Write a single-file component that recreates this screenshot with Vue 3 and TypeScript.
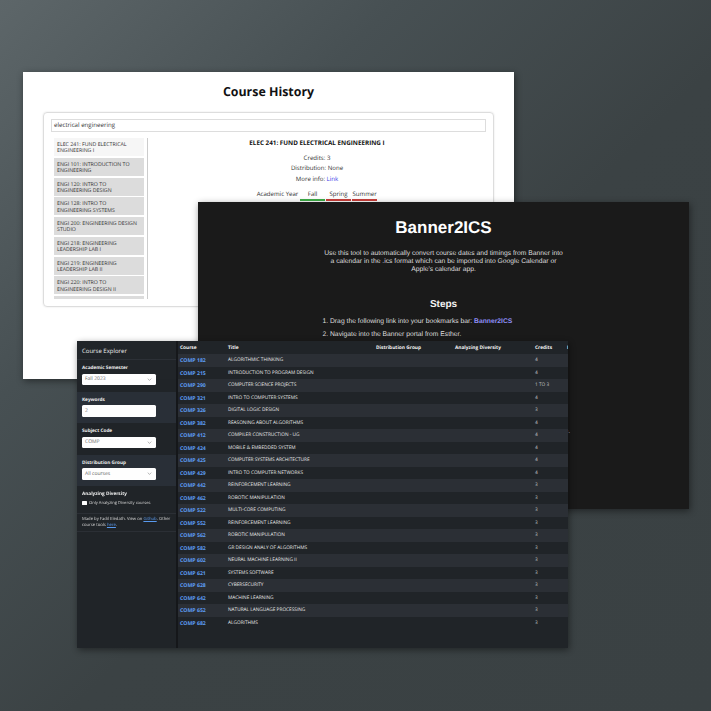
<script setup lang="ts">
const history = [
  'ELEC 241: FUND ELECTRICAL ENGINEERING I',
  'ENGI 101: INTRODUCTION TO ENGINEERING',
  'ENGI 120: INTRO TO ENGINEERING DESIGN',
  'ENGI 128: INTRO TO ENGINEERING SYSTEMS',
  'ENGI 200: ENGINEERING DESIGN STUDIO',
  'ENGI 218: ENGINEERING LEADERSHIP LAB I',
  'ENGI 219: ENGINEERING LEADERSHIP LAB II',
  'ENGI 220: INTRO TO ENGINEERING DESIGN II',
  'ENGI 221: ENGINEERING',
]

const courses: [string, string, string][] = [
  ['COMP 182', 'ALGORITHMIC THINKING', '4'],
  ['COMP 215', 'INTRODUCTION TO PROGRAM DESIGN', '4'],
  ['COMP 290', 'COMPUTER SCIENCE PROJECTS', '1 TO 3'],
  ['COMP 321', 'INTRO TO COMPUTER SYSTEMS', '4'],
  ['COMP 326', 'DIGITAL LOGIC DESIGN', '3'],
  ['COMP 382', 'REASONING ABOUT ALGORITHMS', '4'],
  ['COMP 412', 'COMPILER CONSTRUCTION - UG', '4'],
  ['COMP 424', 'MOBILE & EMBEDDED SYSTEM', '4'],
  ['COMP 425', 'COMPUTER SYSTEMS ARCHITECTURE', '4'],
  ['COMP 429', 'INTRO TO COMPUTER NETWORKS', '4'],
  ['COMP 442', 'REINFORCEMENT LEARNING', '3'],
  ['COMP 462', 'ROBOTIC MANIPULATION', '3'],
  ['COMP 522', 'MULTI-CORE COMPUTING', '3'],
  ['COMP 552', 'REINFORCEMENT LEARNING', '3'],
  ['COMP 562', 'ROBOTIC MANIPULATION', '3'],
  ['COMP 582', 'GR DESIGN ANALY OF ALGORITHMS', '3'],
  ['COMP 602', 'NEURAL MACHINE LEARNING II', '3'],
  ['COMP 621', 'SYSTEMS SOFTWARE', '3'],
  ['COMP 628', 'CYBERSECURITY', '3'],
  ['COMP 642', 'MACHINE LEARNING', '3'],
  ['COMP 652', 'NATURAL LANGUAGE PROCESSING', '3'],
  ['COMP 682', 'ALGORITHMS', '3'],
]

const filters = [
  { label: 'Academic Semester', value: 'Fall 2023', select: true },
  { label: 'Keywords', value: '2', select: false },
  { label: 'Subject Code', value: 'COMP', select: true },
  { label: 'Distribution Group', value: 'All courses', select: true },
]
</script>

<template>
  <div class="desktop">
    <section class="window history">
      <h1>Course History</h1>
      <div class="history-box">
        <div class="search">electrical engineering</div>
        <div class="history-body">
          <ul class="history-list">
            <li v-for="(name, i) in history" :key="name" :class="{ active: i === 0 }">{{ name }}</li>
          </ul>
          <div class="detail">
            <h2>ELEC 241: FUND ELECTRICAL ENGINEERING I</h2>
            <p>Credits: 3</p>
            <p>Distribution: None</p>
            <p>More info: <a>Link</a></p>
            <div class="terms">
              <span class="year">Academic Year</span>
              <span class="term green">Fall</span>
              <span class="term red">Spring</span>
              <span class="term red">Summer</span>
            </div>
          </div>
        </div>
      </div>
    </section>

    <section class="window banner">
      <h1>Banner2ICS</h1>
      <p class="intro">
        Use this tool to automatically convert course dates and timings from Banner into
        a calendar in the .ics format which can be imported into Google Calendar or
        Apple's calendar app.
      </p>
      <h2>Steps</h2>
      <ol>
        <li>Drag the following link into your bookmarks bar: <a>Banner2ICS</a></li>
        <li>Navigate into the Banner portal from Esther.</li>
      </ol>
      <p class="tail"><a>here</a>.</p>
    </section>

    <section class="window explorer">
      <aside class="sidebar">
        <div class="brand">Course Explorer</div>
        <div v-for="f in filters" :key="f.label" class="filter">
          <label>{{ f.label }}</label>
          <div class="field">
            {{ f.value }}
            <svg v-if="f.select" viewBox="0 0 8 5" width="5" height="3">
              <path d="M1 1l3 3 3-3" fill="none" stroke="#888" stroke-width="1" />
            </svg>
          </div>
        </div>
        <div class="diversity">
          <label>Analyzing Diversity</label>
          <div class="check"><i></i>Only Analyzing Diversity courses</div>
        </div>
        <div class="made">
          Made by Fadil Eledath. View on <a>Github</a>. Other course tools <a>here</a>.
        </div>
      </aside>
      <div class="table">
        <div class="row head">
          <span>Course</span>
          <span>Title</span>
          <span>Distribution Group</span>
          <span>Analyzing Diversity</span>
          <span>Credits</span>
          <span>Instructors</span>
        </div>
        <div v-for="c in courses" :key="c[0]" class="row">
          <a>{{ c[0] }}</a>
          <span>{{ c[1] }}</span>
          <span></span>
          <span></span>
          <span class="credits">{{ c[2] }}</span>
          <span></span>
        </div>
      </div>
    </section>
  </div>
</template>

<style>
html, body {
  margin: 0;
  background: #3b4244;
}
</style>

<style scoped>
.desktop {
  position: relative;
  width: 711px;
  height: 711px;
  overflow: hidden;
  text-rendering: geometricPrecision;
  background: linear-gradient(135deg, #5d6669 0%, #475053 28%, #3b4244 55%, #3a4143 100%);
}

.window {
  position: absolute;
  width: 491px;
  height: 307px;
  overflow: hidden;
  opacity: 0.999;
  box-shadow: 1px 2px 7px rgba(0, 0, 0, 0.45);
}

/* course history */
.history {
  left: 23px;
  top: 72px;
  background: #fff;
  color: #222;
  font-family: "Open Sans", sans-serif;
  display: flex;
  flex-direction: column;
  align-items: center;
}
.history h1 {
  margin: 9px 0 10px;
  height: 21px;
  line-height: 21px;
  font-size: 12.4px;
  font-weight: 700;
  color: #111;
}
.history-box {
  width: 451px;
  height: 195px;
  box-sizing: border-box;
  border: 1.5px solid #ddd;
  border-radius: 4px;
  padding: 5.5px 7px;
  box-shadow: 0 0 2px rgba(0, 0, 0, 0.12);
}
.search {
  height: 13.5px;
  box-sizing: border-box;
  border: 1.5px solid #ddd;
  line-height: 10.5px;
  padding-left: 2px;
  font-size: 6.15px;
  color: #333;
}
.history-body {
  display: flex;
  margin-top: 6px;
  padding-left: 3px;
}
.history-list {
  list-style: none;
  margin: 0;
  padding: 0 3px 0 0;
  width: 90px;
  height: 161px;
  overflow: hidden;
  border-right: 1px solid #ccc;
}
.history-list li {
  height: 18px;
  margin-bottom: 1.75px;
  padding: 3px 3px 0;
  box-sizing: border-box;
  background: #dcdcdc;
  font-size: 5.25px;
  line-height: 6.4px;
  color: #333;
}
.history-list li.active {
  background: #f6f6f6;
}
.detail {
  flex: 1;
  display: flex;
  flex-direction: column;
  align-items: center;
  font-size: 6.1px;
  color: #333;
}
.detail h2 {
  margin: 0 0 6px;
  font-size: 6.3px;
  line-height: 9px;
  font-weight: 700;
  color: #111;
}
.detail p {
  margin: 0;
  height: 10.4px;
  line-height: 10.4px;
}
.detail a {
  color: #3a3ae8;
}
.terms {
  display: flex;
  margin-top: 5.3px;
  line-height: 10px;
}
.year {
  margin-right: 1px;
}
.term {
  width: 25.5px;
  text-align: center;
  border-bottom: 2px solid #000;
  margin-left: 0.5px;
}
.green { border-color: #3fae49; }
.red { border-color: #c9403c; }

/* banner2ics */
.banner {
  left: 198px;
  top: 202px;
  background: #1a1a1a;
  color: #ddd;
  font-family: "Liberation Sans", Arial, sans-serif;
  text-align: center;
}
.banner h1 {
  margin: 15px 0 11px;
  line-height: 22px;
  font-size: 17px;
  font-weight: 700;
  color: #fff;
}
.intro {
  width: 243px;
  margin: 0 auto;
  font-size: 6.75px;
  line-height: 8px;
}
.banner h2 {
  margin: 24px 0 0;
  line-height: 14px;
  font-size: 10px;
  font-weight: 700;
  color: #f2f2f2;
}
.banner ol {
  margin: 5px 0 0;
  padding: 0 0 0 132px;
  text-align: left;
  font-size: 6.75px;
  line-height: 9px;
}
.banner li {
  margin-bottom: 3.8px;
}
.banner a {
  color: #8f8ff7;
  font-weight: 700;
}
.tail {
  margin: 88px 0 0;
  padding-left: 356px;
  white-space: nowrap;
  font-size: 6.75px;
  line-height: 9px;
  text-align: left;
}

/* course explorer */
.explorer {
  left: 77px;
  top: 341px;
  display: flex;
  background: #212529;
  font-family: "Open Sans", sans-serif;
  color: #ddd;
}
.sidebar {
  flex: none;
  box-sizing: border-box;
  background: #212529;
  border-right: 2px solid #16181b;
  width: 101px;
}
.brand {
  height: 19px;
  line-height: 20px;
  padding-left: 5px;
  font-size: 6px;
  color: #eee;
  border-bottom: 1px solid #2c3036;
  box-sizing: border-box;
}
.filter {
  height: 31.5px;
  box-sizing: border-box;
  padding: 5px 5px 0;
}
.filter:nth-of-type(3), .filter:nth-of-type(5) {
  background: #2a3038;
}
.filter label, .diversity label {
  display: block;
  font-size: 4.7px;
  line-height: 7px;
  font-weight: 700;
  color: #f0f0f0;
}
.field {
  display: flex;
  align-items: center;
  justify-content: space-between;
  width: 74px;
  height: 11.5px;
  box-sizing: border-box;
  margin-top: 1.5px;
  padding: 0 4px 0 3px;
  background: #fff;
  border-radius: 1.5px;
  font-size: 5px;
  color: #666;
}
.diversity {
  height: 27px;
  box-sizing: border-box;
  padding: 5px 5px 0;
}
.check {
  display: flex;
  align-items: center;
  margin-top: 1.5px;
  font-size: 4.1px;
  line-height: 7px;
  color: #d8d8d8;
}
.check i {
  width: 4.5px;
  height: 4.5px;
  margin-right: 2.5px;
  background: #fff;
  border-radius: 0.5px;
}
.made {
  height: 19px;
  box-sizing: border-box;
  padding: 3px 5px 0;
  border-top: 1px solid #2c3036;
  border-bottom: 1px solid #2c3036;
  font-size: 4.2px;
  line-height: 5.8px;
  color: #d8d8d8;
}
.made a {
  color: #5a9bf0;
  text-decoration: underline;
}
.table {
  flex: 1;
  min-width: 0;
  overflow: hidden;
}
.row {
  display: grid;
  grid-template-columns: 48px 148px 79px 80px 32px 60px;
  align-items: center;
  width: 450px;
  height: 12.5px;
  padding-left: 2px;
  font-size: 4.75px;
  color: #ebebeb;
  white-space: nowrap;
}
.row:nth-child(even) {
  background: #2c3036;
}
.row:nth-child(odd) {
  background: #212529;
}
.row a {
  font-weight: 700;
  color: #5f9ff5;
  font-size: 5.2px;
}
.row.head {
  height: 13.2px;
  font-weight: 700;
  font-size: 4.8px;
  color: #f6f6f6;
}
.credits {
  color: #c8c8c8;
}
</style>
